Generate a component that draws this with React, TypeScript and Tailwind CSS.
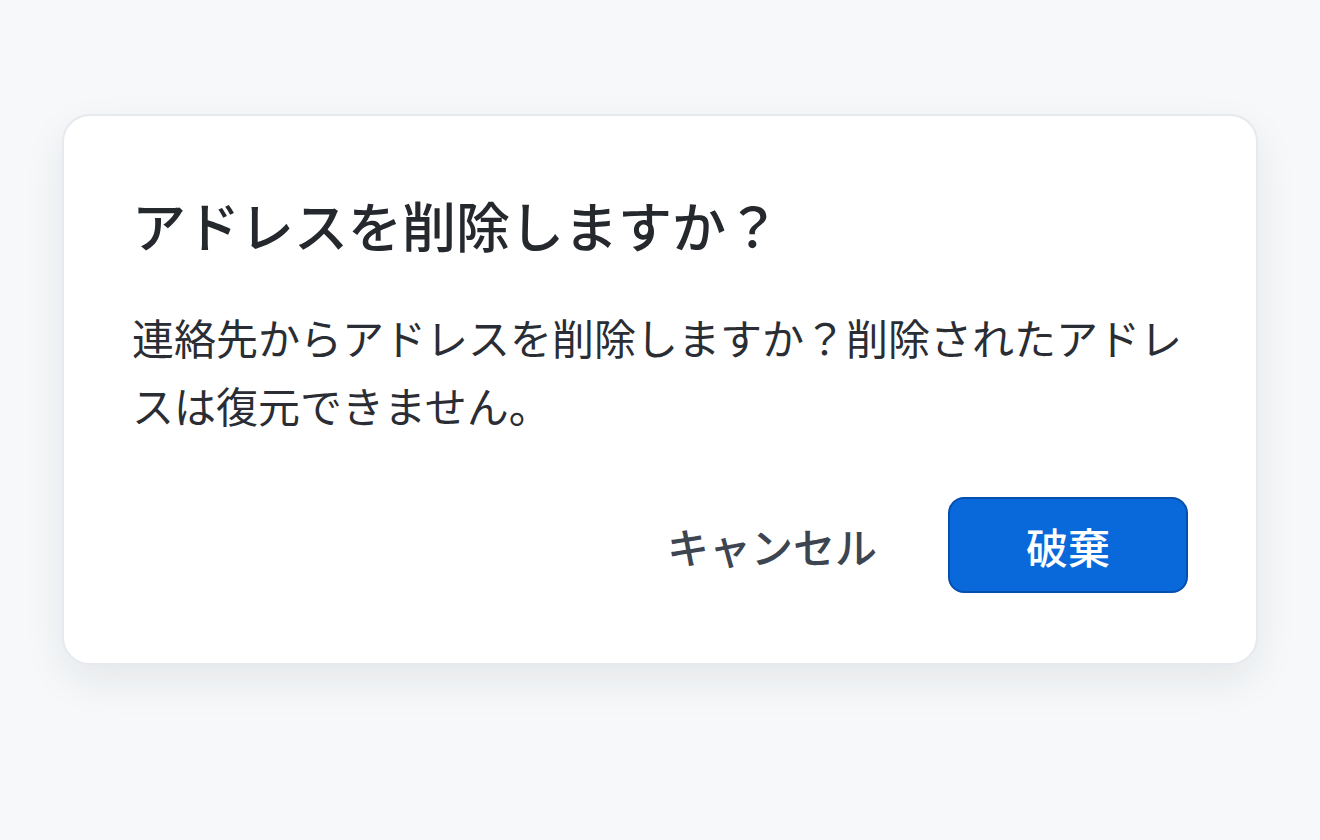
export default function App() {
  return (
    <div
      className="min-h-[840px] bg-[#f6f8fa] px-[62px] pt-[114px]"
      style={{ fontFamily: '"Noto Sans CJK JP", "Noto Sans", sans-serif' }}
    >
      <div className="rounded-[28px] border-2 border-[#e6e9ee] bg-white px-[68px] pt-[74px] pb-[70px] shadow-[0_16px_40px_rgba(31,35,40,0.08)]">
        <h1 className="text-[54px] leading-[1.3] font-medium text-[#25292e]">アドレスを削除しますか？</h1>
        <p className="mt-[43px] text-[42px] leading-[1.62] text-[#2a2e34]">
          連絡先からアドレスを削除しますか？削除されたアドレスは復元できません。
        </p>
        <div className="mt-[58px] flex items-center justify-end gap-[53px]">
          <button className="h-[96px] px-[18px] text-[42px] font-medium text-[#3d4550]">キャンセル</button>
          <button className="h-[96px] w-[240px] rounded-[16px] border-2 border-[#0550ae] bg-[#0969da] text-[42px] font-medium text-white">
            破棄
          </button>
        </div>
      </div>
    </div>
  );
}
